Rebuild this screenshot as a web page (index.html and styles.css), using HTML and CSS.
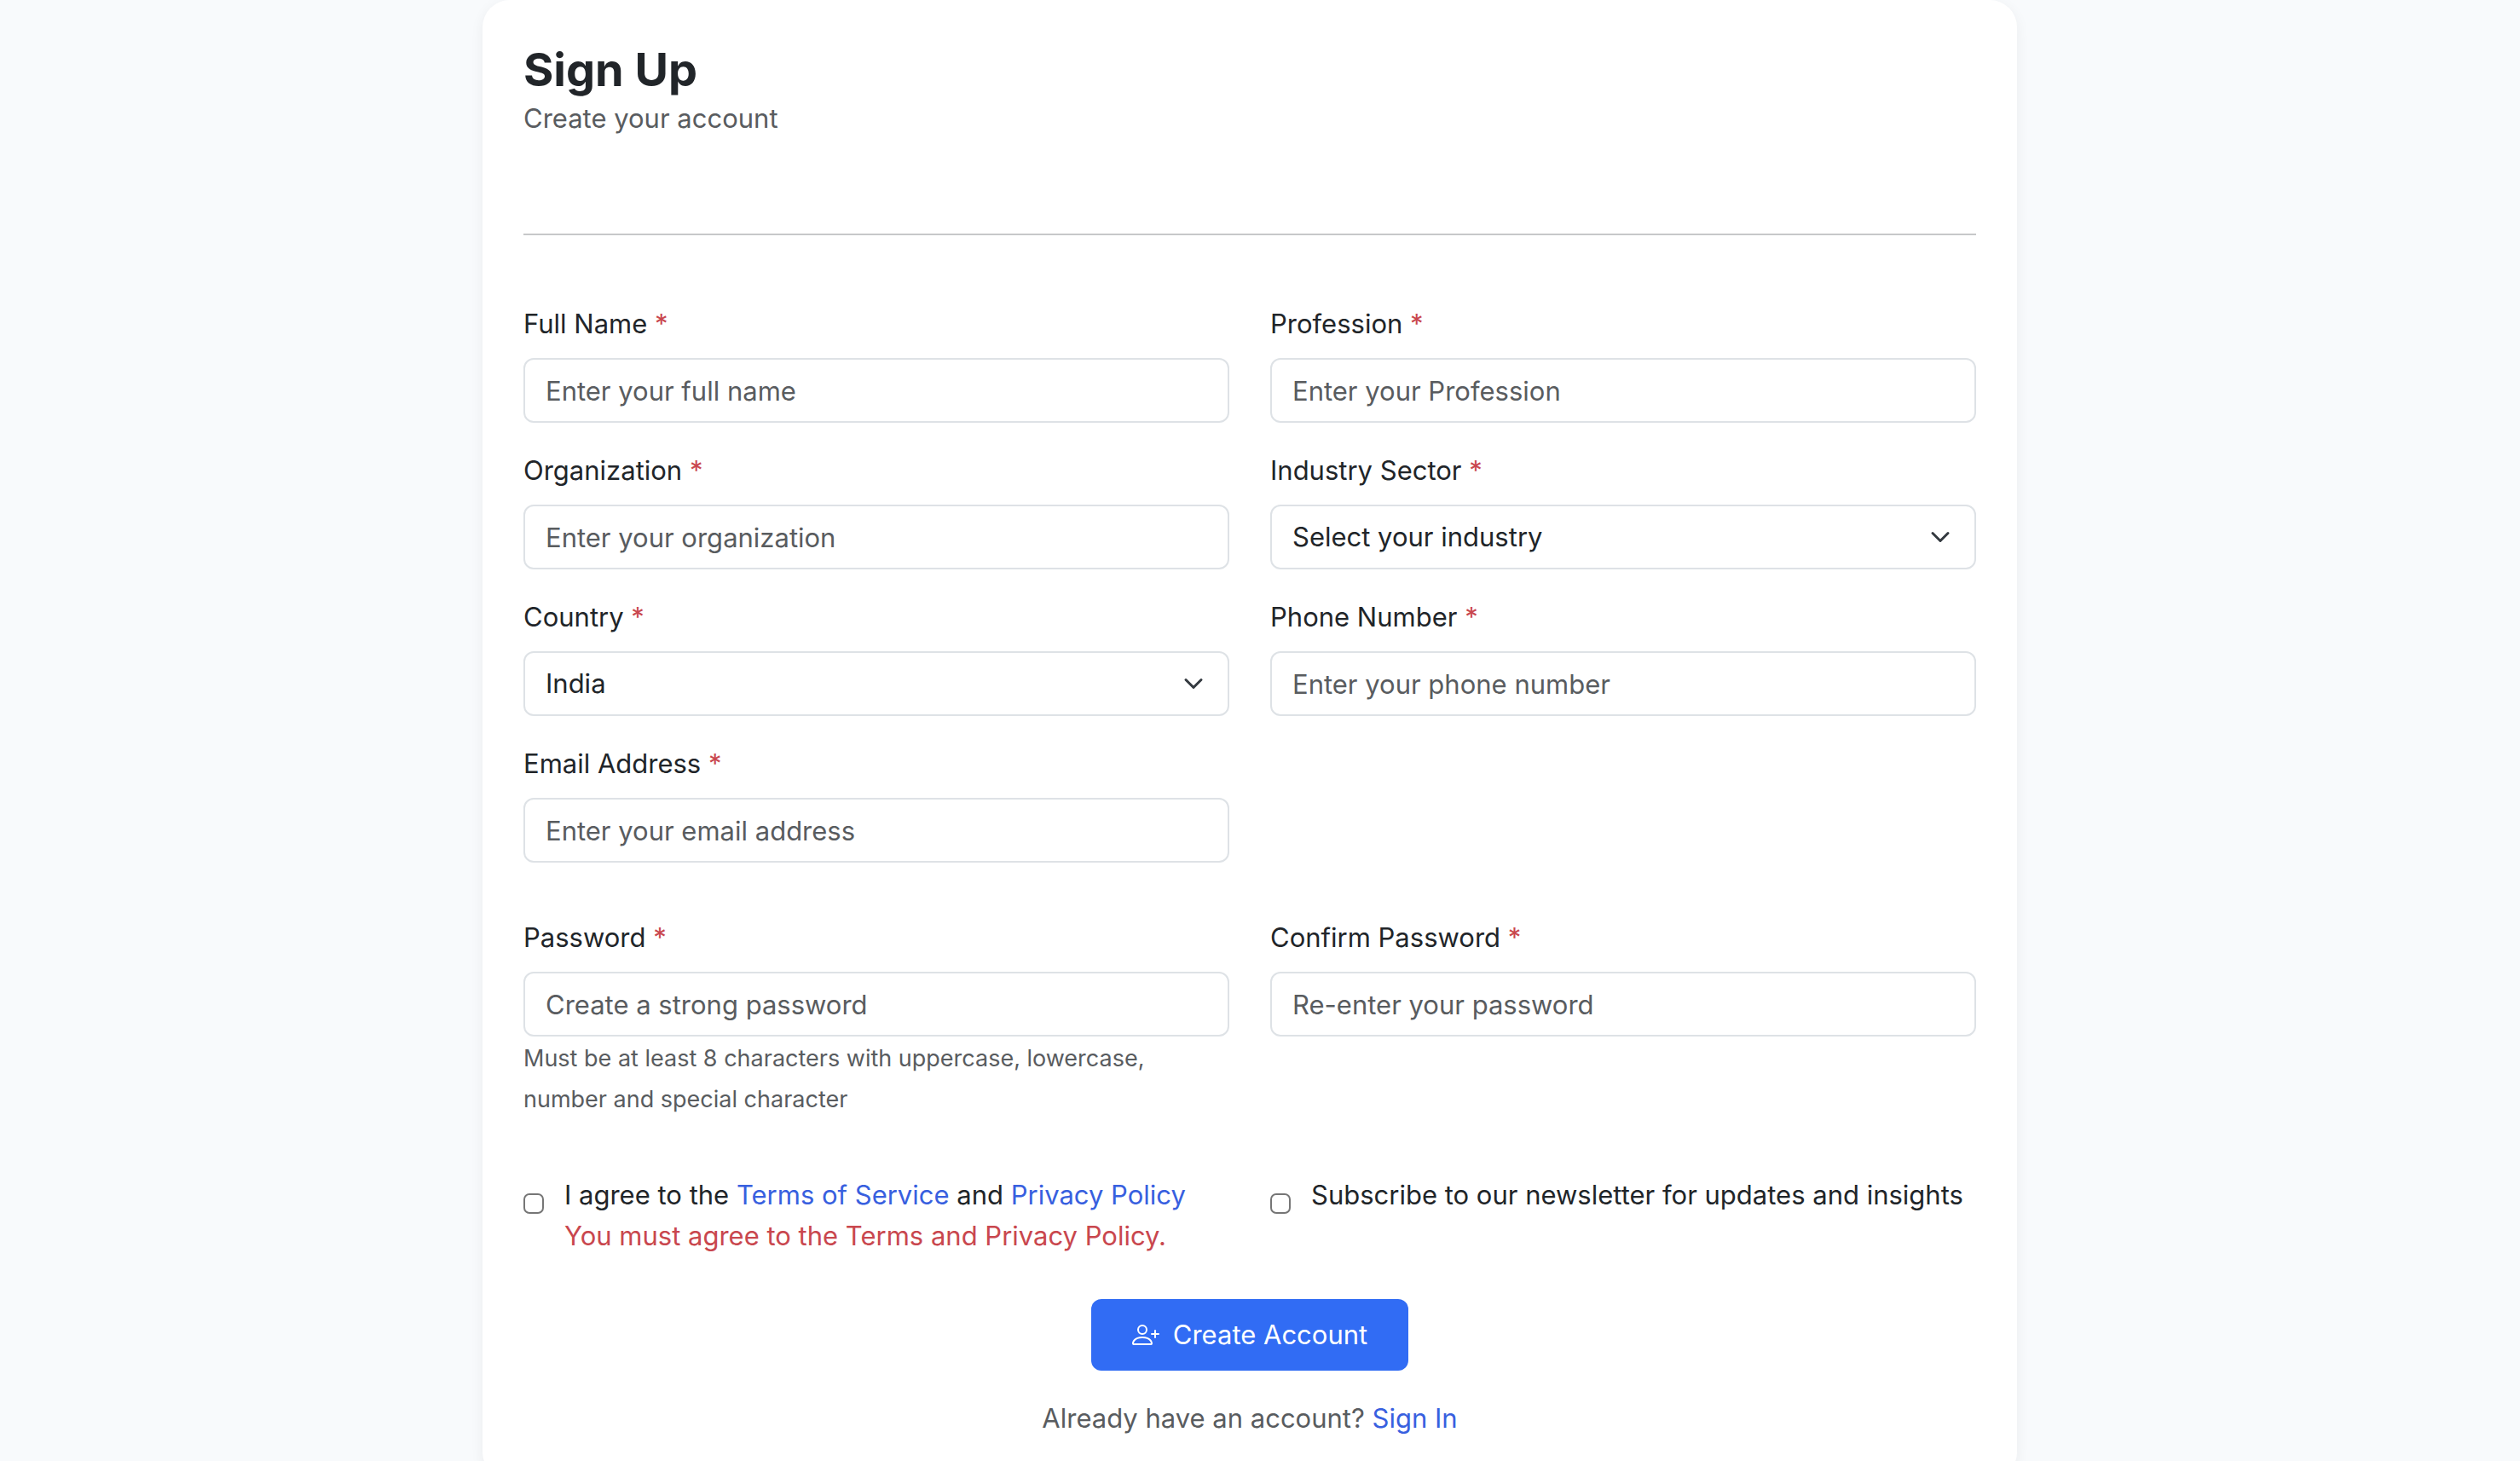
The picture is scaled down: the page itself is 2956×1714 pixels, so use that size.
FILE: index.html
```html
<!DOCTYPE html>
<html lang="en">
<head>
<meta charset="utf-8">
<title>Sign Up</title>
<link rel="stylesheet" href="styles.css">
</head>
<body>
<main class="card">
  <header class="card-header">
    <h1 class="title">Sign Up</h1>
    <p class="subtitle">Create your account</p>
  </header>
  <form class="form">
    <div class="grid">
      <div class="field">
        <label for="name">Full Name <span class="required">*</span></label>
        <input class="control" id="name" type="text" placeholder="Enter your full name">
      </div>
      <div class="field">
        <label for="profession">Profession <span class="required">*</span></label>
        <input class="control" id="profession" type="text" placeholder="Enter your Profession">
      </div>
      <div class="field">
        <label for="organization">Organization <span class="required">*</span></label>
        <input class="control" id="organization" type="text" placeholder="Enter your organization">
      </div>
      <div class="field">
        <label for="industry">Industry Sector <span class="required">*</span></label>
        <div class="select-wrap">
          <select class="control" id="industry"><option>Select your industry</option></select>
          <svg class="chevron" viewBox="0 0 16 16" aria-hidden="true"><path d="m2 5 6 6 6-6"/></svg>
        </div>
      </div>
      <div class="field">
        <label for="country">Country <span class="required">*</span></label>
        <div class="select-wrap">
          <select class="control" id="country"><option>India</option></select>
          <svg class="chevron" viewBox="0 0 16 16" aria-hidden="true"><path d="m2 5 6 6 6-6"/></svg>
        </div>
      </div>
      <div class="field">
        <label for="phone">Phone Number <span class="required">*</span></label>
        <input class="control" id="phone" type="tel" placeholder="Enter your phone number">
      </div>
      <div class="field">
        <label for="email">Email Address <span class="required">*</span></label>
        <input class="control" id="email" type="email" placeholder="Enter your email address">
      </div>
    </div>
    <div class="grid">
      <div class="field">
        <label for="password">Password <span class="required">*</span></label>
        <input class="control" id="password" type="password" placeholder="Create a strong password" aria-describedby="password-help">
        <p class="help" id="password-help">Must be at least 8 characters with uppercase, lowercase, number and special character</p>
      </div>
      <div class="field">
        <label for="confirm">Confirm Password <span class="required">*</span></label>
        <input class="control" id="confirm" type="password" placeholder="Re-enter your password">
      </div>
    </div>
    <div class="grid">
      <div class="check">
        <input class="checkbox" id="terms" type="checkbox" aria-describedby="terms-error">
        <div>
          <label for="terms">I agree to the <a href="#">Terms of Service</a> and <a href="#">Privacy Policy</a></label>
          <p class="error" id="terms-error">You must agree to the Terms and Privacy Policy.</p>
        </div>
      </div>
      <div class="check">
        <input class="checkbox" id="newsletter" type="checkbox">
        <label for="newsletter">Subscribe to our newsletter for updates and insights</label>
      </div>
    </div>
    <div class="actions">
      <button class="submit" type="submit">
        <svg class="submit-icon" viewBox="0 0 16 16" aria-hidden="true"><path d="M6 8a3 3 0 1 0 0-6 3 3 0 0 0 0 6m2-3a2 2 0 1 1-4 0 2 2 0 0 1 4 0m4 8c0 1-1 1-1 1H1s-1 0-1-1 1-4 6-4 6 3 6 4m-1-.004c-.001-.246-.154-.986-.832-1.664C9.516 10.68 8.289 10 6 10s-3.516.68-4.168 1.332c-.678.678-.83 1.418-.832 1.664z"/><path d="M13.5 5a.5.5 0 0 1 .5.5V7h1.5a.5.5 0 0 1 0 1H14v1.5a.5.5 0 0 1-1 0V8h-1.5a.5.5 0 0 1 0-1H13V5.5a.5.5 0 0 1 .5-.5"/></svg>
        Create Account
      </button>
      <p class="signin">Already have an account? <a href="#">Sign In</a></p>
    </div>
  </form>
</main>
</body>
</html>
```

FILE: styles.css
```css
* { box-sizing: border-box; }

body {
  margin: 0;
  padding: 0 24px 0 0;
  background: #f8fafc;
  color: #212529;
  font: 400 31px/48px Inter, "Liberation Sans", sans-serif;
}

h1, p { margin: 0; }

a { color: #3860df; text-decoration: none; }

.card {
  max-width: 1800px;
  margin: 0 auto;
  padding: 48px;
  background: #fff;
  border-radius: 32px;
  box-shadow: 0 4px 16px rgba(0, 0, 0, 0.06);
}

.card-header {
  padding-bottom: 111px;
  border-bottom: 2px solid #c7c8c9;
}

.title {
  font-size: 54px;
  font-weight: 700;
  line-height: 67px;
}

.subtitle, .signin { color: #595c5f; }

.form { padding-top: 80px; }

.grid {
  display: grid;
  grid-template-columns: 1fr 1fr;
  gap: 32px 48px;
}

.grid + .grid { margin-top: 64px; }

.field { min-width: 0; }

.field label {
  display: block;
  margin-bottom: 16px;
}

.required { color: #c9474e; }

.control {
  display: block;
  width: 100%;
  height: 76px;
  padding: 0 24px;
  border: 2px solid #dee2e6;
  border-radius: 12px;
  background: #fff;
  color: inherit;
  font: inherit;
  appearance: none;
}

.control::placeholder { color: #595c5f; opacity: 1; }

.select-wrap { display: grid; align-items: center; }

.select-wrap > * { grid-area: 1 / 1; }

.chevron {
  justify-self: end;
  width: 32px;
  height: 24px;
  margin-right: 26px;
  fill: none;
  stroke: #343a40;
  stroke-width: 2;
  stroke-linecap: round;
  stroke-linejoin: round;
  pointer-events: none;
}

.help {
  margin-top: 2px;
  color: #595c5f;
  font-size: 27px;
}

.check {
  display: flex;
  align-items: flex-start;
  gap: 24px;
}

.checkbox {
  flex: none;
  width: 24px;
  height: 24px;
  margin: 22px 0 0;
  border: 2px solid #767676;
  border-radius: 7px;
  background: #fff;
  appearance: none;
}

.error { color: #c9474e; }

.actions {
  display: flex;
  flex-direction: column;
  align-items: center;
  gap: 32px;
  margin-top: 50px;
}

.submit {
  display: flex;
  align-items: center;
  gap: 16px;
  height: 84px;
  padding: 0 48px;
  border: 0;
  border-radius: 12px;
  background: #316cf4;
  color: #fff;
  font: inherit;
}

.submit-icon {
  width: 32px;
  height: 32px;
  fill: currentColor;
}
```
